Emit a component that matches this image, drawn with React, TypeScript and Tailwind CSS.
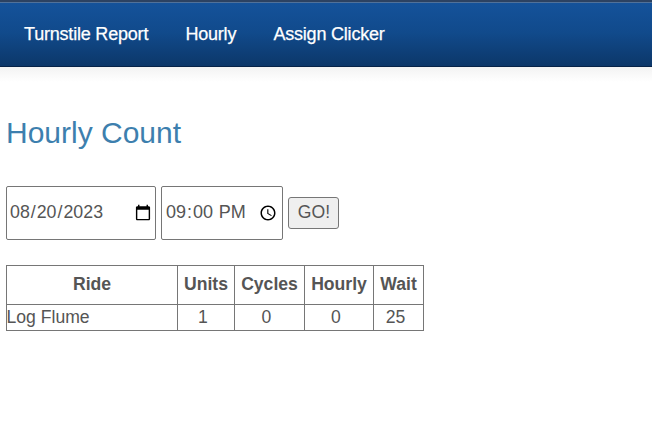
const links = ["Turnstile Report", "Hourly", "Assign Clicker"];
const headings = ["Units", "Cycles", "Hourly", "Wait"];
const counts = ["1", "0", "0", "25"];

export default function App() {
  return (
    <div className="h-[422px] w-[652px] overflow-hidden bg-white font-['Liberation_Sans',Arial,sans-serif] text-[17.6px] text-[#555]">
      <nav className="flex h-[67px] items-center gap-[37.2px] border-b border-[#062348] bg-[linear-gradient(#2c4262_0_2px,#50719a_2px_3px,#14529a_3px,#114a8b_50%,#0c3769_100%)] pt-0.5 pl-6 text-[18px] tracking-[-0.2px] text-white [-webkit-text-stroke:0.25px_white]">
        {links.map((l) => (
          <a key={l} href="#" className="whitespace-nowrap">
            {l}
          </a>
        ))}
      </nav>
      <div className="h-[15px] bg-linear-to-b from-[#f3f3f3] to-white" />
      <main className="pl-1.5">
        <h1 className="mt-[29px] h-[44px] text-[30px] leading-[44px] text-[#3d7fae]">Hourly Count</h1>
        <form className="mt-[31px] flex h-[54px] items-center" onSubmit={(e) => e.preventDefault()}>
          <input
            type="date"
            defaultValue="2023-08-20"
            className="h-[54px] w-[150px] rounded-[2px] border border-[#767676] bg-white pr-px pb-0.5 pl-[2px] text-[17.8px] [&::-webkit-calendar-picker-indicator]:translate-y-px"
          />
          <input
            type="time"
            defaultValue="21:00"
            className="ml-[5px] h-[54px] w-[122px] rounded-[2px] border border-[#767676] bg-white pr-px pb-0.5 pl-[3px] text-[18px] [&::-webkit-calendar-picker-indicator]:translate-y-px"
          />
          <button className="ml-[5px] h-8 w-[51px] rounded-[3px] border border-[#767676] bg-[#efefef] pb-0.5 pl-px leading-[28px]">
            GO!
          </button>
        </form>
        <table className="mt-[25px] w-[418px] table-fixed border-collapse">
          <colgroup>
            <col className="w-[171px]" />
            <col className="w-[57px]" />
            <col className="w-[70px]" />
            <col className="w-[69px]" />
            <col className="w-[50px]" />
          </colgroup>
          <thead>
            <tr className="h-[39px]">
              <th className="border border-[#767676] p-0 pb-0.5 font-bold">Ride</th>
              {headings.map((h) => (
                <th key={h} className="border border-[#767676] p-0 pb-0.5 font-bold">
                  {h}
                </th>
              ))}
            </tr>
          </thead>
          <tbody>
            <tr className="h-[26px]">
              <td className="border border-[#767676] p-0 leading-[25px]">
                <span className="-ml-[0.5px]">Log Flume</span>
              </td>
              {counts.map((c, i) => (
                <td key={i} className="border border-[#767676] p-0 pr-[6px] text-center leading-[25px]">
                  {c}
                </td>
              ))}
            </tr>
          </tbody>
        </table>
      </main>
    </div>
  );
}
